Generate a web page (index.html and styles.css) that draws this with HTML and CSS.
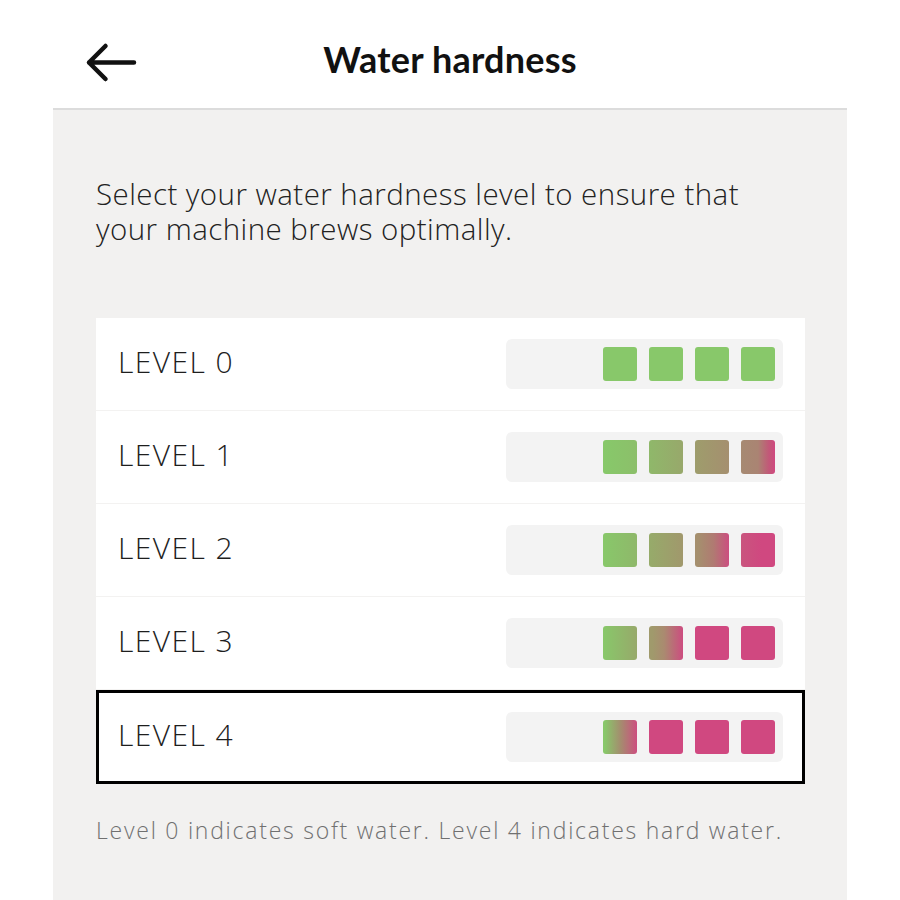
FILE: index.html
```html
<!DOCTYPE html>
<html lang="en">
<head>
<meta charset="utf-8">
<title>Water hardness</title>
<link rel="stylesheet" href="styles.css">
</head>
<body>
<header class="topbar">
  <button class="back" aria-label="Back">
    <svg width="54" height="42" viewBox="0 0 54 42" aria-hidden="true">
      <path d="M50 20.5H5M21.5 4L5 20.5L21.5 37" fill="none" stroke="#111" stroke-width="4.5" stroke-linecap="round" stroke-linejoin="round"/>
    </svg>
  </button>
  <h1 class="title">Water hardness</h1>
</header>
<main class="panel">
  <p class="intro">Select your water hardness level to ensure that your machine brews optimally.</p>
  <ul class="levels">
    <li class="level lv0"><span class="label">LEVEL 0</span><span class="meter"><i class="sq"></i><i class="sq"></i><i class="sq"></i><i class="sq"></i></span></li>
    <li class="level lv1"><span class="label">LEVEL 1</span><span class="meter"><i class="sq"></i><i class="sq"></i><i class="sq"></i><i class="sq"></i></span></li>
    <li class="level lv2"><span class="label">LEVEL 2</span><span class="meter"><i class="sq"></i><i class="sq"></i><i class="sq"></i><i class="sq"></i></span></li>
    <li class="level lv3"><span class="label">LEVEL 3</span><span class="meter"><i class="sq"></i><i class="sq"></i><i class="sq"></i><i class="sq"></i></span></li>
    <li class="level lv4 selected"><span class="label">LEVEL 4</span><span class="meter"><i class="sq"></i><i class="sq"></i><i class="sq"></i><i class="sq"></i></span></li>
  </ul>
  <p class="note">Level 0 indicates soft water. Level 4 indicates hard water.</p>
</main>
</body>
</html>
```
FILE: styles.css
```css
* { box-sizing: border-box; }
html, body { margin: 0; padding: 0; background: #ffffff; }
body {
  font-family: "Open Sans", "Noto Sans", sans-serif;
  color: #1e1e1e;
  width: 900px;
  height: 900px;
  overflow: hidden;
}
.topbar {
  height: 108px;
  display: grid;
  grid-template-columns: 1fr auto 1fr;
  align-items: center;
  padding: 0 0 0 84px;
}
.back {
  border: 0;
  background: none;
  padding: 0;
  width: 54px;
  height: 42px;
  justify-self: start;
  margin-top: 18px;
  cursor: pointer;
}
.back svg { display: block; }
.title {
  margin: 10px 0 0 -84px;
  font-family: "Lato", "Noto Sans", sans-serif;
  font-size: 36px;
  font-weight: 700;
  letter-spacing: 0.2px;
  color: #111;
}
.panel {
  margin: 0 53px;
  height: 792px;
  background: #f2f1f0;
  border-top: 2px solid #dcdcdc;
  padding: 66px 42px 0 43px;
}
.intro {
  margin: 0;
  font-size: 29.5px;
  font-weight: 300;
  line-height: 35px;
  letter-spacing: 0.45px;
  color: #222;
  max-width: 665px;
}
.levels {
  list-style: none;
  margin: 72px 0 0;
  padding: 0;
  background: #fff;
}
.level {
  height: 93px;
  display: flex;
  align-items: center;
  justify-content: space-between;
  padding: 0 22px;
  border-bottom: 1px solid #f3f2f1;
}
.level:last-child { border-bottom: 0; height: 94px; }
.level.selected { box-shadow: inset 0 0 0 3px #000; }
.label {
  font-size: 30px;
  font-weight: 300;
  letter-spacing: 1.4px;
  color: #1e1e1e;
  margin-top: -5px;
}
.meter {
  width: 277px;
  height: 50px;
  background: #f3f3f3;
  border-radius: 6px;
  display: flex;
  justify-content: flex-end;
  align-items: center;
  gap: 12px;
  padding-right: 8px;
}
.sq {
  width: 34px;
  height: 34px;
  border-radius: 3px;
  background: #88c86a;
}
.lv1 .sq:nth-child(1) { background: linear-gradient(90deg, #87c96a, #8cbf6a); }
.lv1 .sq:nth-child(2) { background: linear-gradient(90deg, #8fb86a, #98a86b); }
.lv1 .sq:nth-child(3) { background: linear-gradient(90deg, #9e9d6c, #a58f6f); }
.lv1 .sq:nth-child(4) { background: linear-gradient(90deg, #a68a72 0%, #aa8473 50%, #c25878 82%, #d04880 100%); }
.lv2 .sq:nth-child(1) { background: linear-gradient(90deg, #88c86a, #8fb86a); }
.lv2 .sq:nth-child(2) { background: linear-gradient(90deg, #96ab6a, #a1986c); }
.lv2 .sq:nth-child(3) { background: linear-gradient(90deg, #a58f6e 10%, #b07a72 55%, #cc4e80 100%); }
.lv2 .sq:nth-child(4) { background: linear-gradient(90deg, #c9557e, #d04880 60%); }
.lv3 .sq:nth-child(1) { background: linear-gradient(90deg, #88c86a, #97a96a); }
.lv3 .sq:nth-child(2) { background: linear-gradient(90deg, #a09a6c 10%, #aa8a70 45%, #cd4c80 100%); }
.lv3 .sq:nth-child(3),
.lv3 .sq:nth-child(4) { background: #d04880; }
.lv4 .sq:nth-child(1) { background: linear-gradient(90deg, #88c86a 5%, #a38f6e 50%, #cd4e80 100%); }
.lv4 .sq:nth-child(2),
.lv4 .sq:nth-child(3),
.lv4 .sq:nth-child(4) { background: #d04880; }
.note {
  margin: 30px 0 0;
  font-size: 23px;
  font-weight: 300;
  letter-spacing: 1.75px;
  color: #707070;
}
```
